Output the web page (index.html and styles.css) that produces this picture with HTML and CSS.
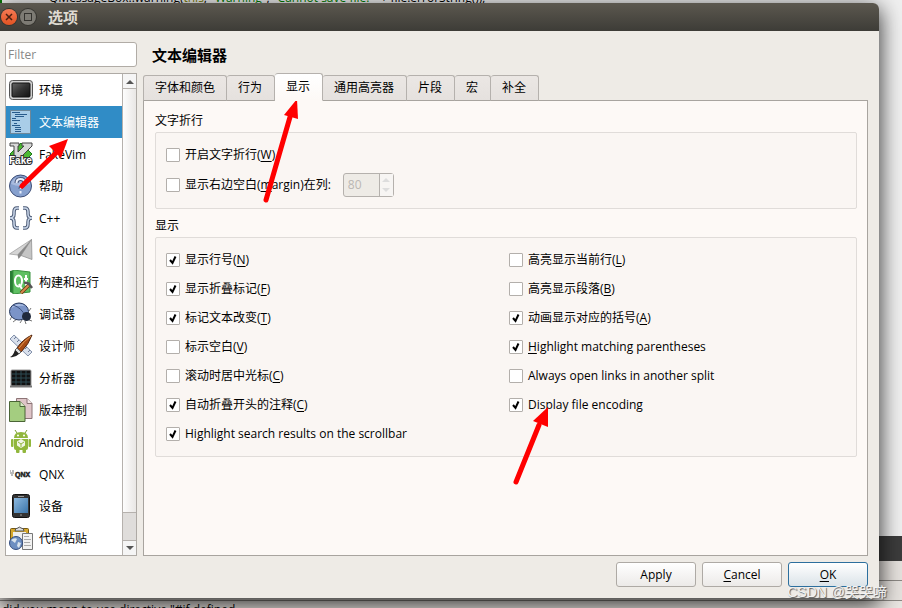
FILE: index.html
```
<!DOCTYPE html>
<html lang="zh-CN">
<head>
    <meta charset="utf-8">
    <title>选项</title>
    <link rel="stylesheet" href="styles.css">
</head>
<body>
    <!-- Editor window behind the dialog -->
    <div class="backdrop">
        <div class="editor">
            <div class="codeLine">QMessageBox::warning(<span class="keyword">this</span>, <span class="string">"Warning"</span>, <span class="string">"Cannot save file: "</span> + file.errorString());</div>
        </div>
        <div class="darkBar"></div>
        <div class="outputBar"></div>
        <div class="outputBar"></div>
        <div class="outputText">did you mean to use directive "#if defined</div>
    </div>

    <div class="dialog">
        <div class="titleBar">
            <button class="winBtn close" aria-label="关闭">
                <svg width="16" height="16" viewBox="0 0 16 16"><path d="M5 5l6 6M11 5l-6 6" stroke="#4a2012" stroke-width="1.5"/></svg>
            </button>
            <button class="winBtn" aria-label="最大化">
                <svg width="16" height="16" viewBox="0 0 16 16"><rect x="4.500" y="4.500" width="7" height="7" fill="none" stroke="#33322e"/></svg>
            </button>
            <span class="titleText">选项</span>
        </div>

        <div class="content">
            <div class="sidebar">
                <input type="text" class="filter" placeholder="Filter" aria-label="Filter">
                <div class="listBox">
                    <ul class="categories">
                        <li>
                            <svg viewBox="0 0 24 24">
                                <defs><linearGradient id="screen" x1="0" y1="0" x2="1" y2="1"><stop offset="0" stop-color="#666"/><stop offset=".5" stop-color="#333"/><stop offset="1" stop-color="#111"/></linearGradient></defs>
                                <rect x=".5" y="2.500" width="23" height="19" rx="3" fill="#d0d0d0" stroke="#555"/>
                                <rect x="3" y="5" width="18" height="14" rx="1" fill="url(#screen)" stroke="#111"/>
                            </svg>
                            <span>环境</span>
                        </li>
                        <li class="selected">
                            <svg viewBox="0 0 24 24">
                                <rect x="1.500" y=".5" width="20" height="23" fill="#a9cde8" stroke="#6c8799"/>
                                <path d="M3 2.500h8M6 4.500h12M6 6.500h9M3 8.500h4M3 10.500h8M5 13.500h3M3 15.500h8M6 17.500h6M6 19.500h6M6 21.500h6" stroke="#285b8c"/>
                            </svg>
                            <span>文本编辑器</span>
                        </li>
                        <li>
                            <svg viewBox="0 0 24 24">
                                <path d="M12 1l11 11-11 11L1 12z" fill="#4cb833" stroke="#1c7a1a"/>
                                <path d="M1 1h9v3H9v6l6-6h-2V1h10v3L11 16H5V4H1z" fill="#d8d8d8" stroke="#444"/>
                                <text x="0" y="22" class="fakeLogo">Fake</text>
                            </svg>
                            <span>FakeVim</span>
                        </li>
                        <li>
                            <svg viewBox="0 0 24 24">
                                <circle cx="11.500" cy="12" r="11" fill="#86a0ce" stroke="#3e4e77"/>
                                <path d="M2 10a10 10 0 0 1 19 0Q11 14 2 10z" fill="#a9bbde"/>
                                <path d="M7.500 9q0-4 4-4t4 3.500q0 2-2 3.500t-2 3" fill="none" stroke="#46557a" stroke-width="4"/>
                                <path d="M7.500 9q0-4 4-4t4 3.500q0 2-2 3.500t-2 3M11.500 17v2.500" fill="none" stroke="#e8eefb" stroke-width="2"/>
                            </svg>
                            <span>帮助</span>
                        </li>
                        <li>
                            <svg viewBox="0 0 24 24" fill="none">
                                <path d="M10 2H8Q5 2 5 6v2q0 4-4 4 4 0 4 4v2q0 4 3 4h2M14 2h2q3 0 3 4v2q0 4 4 4-4 0-4 4v2q0 4-3 4h-2" stroke="#4f5d78" stroke-width="3.500"/>
                                <path d="M10 2H8Q5 2 5 6v2q0 4-4 4 4 0 4 4v2q0 4 3 4h2M14 2h2q3 0 3 4v2q0 4 4 4-4 0-4 4v2q0 4-3 4h-2" stroke="#cbd8ea" stroke-width="1.500"/>
                            </svg>
                            <span>C++</span>
                        </li>
                        <li>
                            <svg viewBox="0 0 24 24">
                                <path d="M22.500 1.500L.5 16l8 1z" fill="#d5d5d5" stroke="#999" stroke-width=".7"/>
                                <path d="M22.500 1.500L8.500 17l1 4 3-3.500z" fill="#888"/>
                                <path d="M22.500 1.500L12 17.500l11 4z" fill="#c5c5c5" stroke="#888" stroke-width=".7"/>
                            </svg>
                            <span>Qt Quick</span>
                        </li>
                        <li>
                            <svg viewBox="0 0 24 24">
                                <path d="M1 1l4-1v24l-4-2z" fill="#287c34"/>
                                <path d="M4 0l17 2v20L4 24z" fill="#5fc063" stroke="#39913f"/>
                                <ellipse cx="9.500" cy="11" rx="3.500" ry="5.500" fill="none" stroke="#fff" stroke-width="2"/>
                                <path d="M10 14l3 5M17 5v9q0 2 2 2M15 9h4" fill="none" stroke="#fff" stroke-width="2"/>
                                <path d="M12 23l8-8" stroke="#693411" stroke-width="3.500"/>
                                <path d="M12 23l8-8" stroke="#d68a4b" stroke-width="2"/>
                                <path d="M15 13q3-1 5 1l3 4" fill="none" stroke="#555" stroke-width="2.500"/>
                            </svg>
                            <span>构建和运行</span>
                        </li>
                        <li>
                            <svg viewBox="0 0 24 24">
                                <path d="M3 14l-2 4M8 17l-4 3M13 18l-2 3M20 18l3 1M16 19l1 3M20 9l2-3" stroke="#777"/>
                                <ellipse cx="10" cy="9.500" rx="9.500" ry="8.500" fill="#7b94c8" stroke="#27385d"/>
                                <path d="M2 6Q9-1 16 4 8 3 2 6z" fill="#aabde2"/>
                                <path d="M4 3q9 3 12 11" fill="none" stroke="#3c507f"/>
                                <circle cx="17.500" cy="14.500" r="4.500" fill="#202a3d"/>
                            </svg>
                            <span>调试器</span>
                        </li>
                        <li>
                            <svg viewBox="0 0 24 24">
                                <path d="M1 5l4-4 18 17-4 4z" fill="#d9e0ec" stroke="#8492ac"/>
                                <path d="M7 3L5 5M10 6L8 8M13 9l-2 2M18 13l-2 2M21 16l-2 2" stroke="#6d7c99"/>
                                <path d="M23 1Q14 5 8 14l4 4Q20 10 23 1z" fill="#a94c15" stroke="#54260f"/>
                                <path d="M22 2Q15 7 10 14" stroke="#e29a54" fill="none"/>
                                <path d="M8 14l4 4-2 2-4-4z" fill="#ddd" stroke="#666"/>
                                <path d="M6 16l4 4q-4 4-9 3 3-1 5-7z" fill="#222"/>
                            </svg>
                            <span>设计师</span>
                        </li>
                        <li>
                            <svg viewBox="0 0 24 24">
                                <rect x="2" y="4" width="20" height="16" rx="1" fill="#111" stroke="#999"/>
                                <path d="M3 8h18M3 12h18M3 16h18M7 5v14M12 5v14M17 5v14" stroke="#2d4a52"/>
                                <path d="M1 20.500h22" stroke="#777" stroke-width="2"/>
                            </svg>
                            <span>分析器</span>
                        </li>
                        <li>
                            <svg viewBox="0 0 24 24">
                                <path d="M7.500.5H18l5 5v15H7.500z" fill="#dfc5c8" stroke="#8c7476"/>
                                <path d="M18 .5v5h5" fill="#f5e8e9" stroke="#8c7476"/>
                                <path d="M.5 3.500H11l5 5v15H.5z" fill="#a4cd80" stroke="#4a6536"/>
                                <path d="M11 3.500v5h5" fill="#d9ecc7" stroke="#4a6536"/>
                            </svg>
                            <span>版本控制</span>
                        </li>
                        <li>
                            <svg viewBox="0 0 24 24" fill="#91b73c">
                                <path d="M8 3L6 0M16 3l2-3" stroke="#7a9d2f"/>
                                <path d="M5 8q0-6 7-6t7 6z"/>
                                <path d="M5 9h14v9q0 2-2 2H7q-2 0-2-2z"/>
                                <rect x="2" y="9" width="2.500" height="8" rx="1"/><rect x="19.500" y="9" width="2.500" height="8" rx="1"/>
                                <rect x="7" y="18" width="3.500" height="5" rx="1"/><rect x="13.500" y="18" width="3.500" height="5" rx="1"/>
                                <circle cx="9" cy="5.500" r="1" fill="#fff"/><circle cx="15" cy="5.500" r="1" fill="#fff"/>
                                <path d="M12 9l4 2.500v4L12 18l-4-2.500v-4z" fill="#f1f5e7"/>
                                <path d="M9 12l3 2 3-2M12 14v3" fill="none" stroke="#91b73c"/>
                            </svg>
                            <span>Android</span>
                        </li>
                        <li>
                            <svg viewBox="0 0 24 24">
                                <path d="M1 9h1M3 9h2M1 11h4M2 13h2" stroke="#777"/>
                                <text x="6" y="15" class="qnxLogo">QNX</text>
                            </svg>
                            <span>QNX</span>
                        </li>
                        <li>
                            <svg viewBox="0 0 24 24">
                                <defs><linearGradient id="tablet" x1="0" y1="0" x2="1" y2="1"><stop offset="0" stop-color="#8db9df"/><stop offset="1" stop-color="#3a75aa"/></linearGradient></defs>
                                <rect x="3.500" y=".5" width="17" height="23" rx="2" fill="#333" stroke="#111"/>
                                <rect x="5" y="4" width="14" height="15" fill="url(#tablet)"/>
                                <path d="M9 2.500h6M11 21h2" stroke="#999"/>
                            </svg>
                            <span>设备</span>
                        </li>
                        <li>
                            <svg viewBox="0 0 24 24">
                                <rect x="1.500" y="2.500" width="18" height="17" rx="1" fill="#d6a72b" stroke="#735816"/>
                                <path d="M6 5q0-3 3-3 1-2 3 0 3 0 3 3z" fill="#ddd" stroke="#555"/>
                                <rect x="4" y="6" width="13" height="11" fill="#eee"/>
                                <path d="M13.500 7.500h10v16h-10z" fill="#f2f2f2" stroke="#777"/>
                                <path d="M15 10.500h5M15 13.500h7M15 16.500h6M15 19.500h7" stroke="#aaa"/>
                                <circle cx="7" cy="17" r="6.500" fill="#6e8fc1" stroke="#344d7e"/>
                                <path d="M2 14q4-3 6-1l-2 4zM9 16l3 1-2 5-2-2z" fill="#dae4ed"/>
                            </svg>
                            <span>代码粘贴</span>
                        </li>
                    </ul>
                    <div class="scrollbar">
                        <div class="arrowBtn"><svg width="8" height="5" viewBox="0 0 8 5"><path d="M0 5l4-4 4 4z" fill="#555"/></svg></div>
                        <div class="thumb"></div>
                        <div class="trough"></div>
                        <div class="arrowBtn"><svg width="8" height="5" viewBox="0 0 8 5"><path d="M0 0l4 4 4-4z" fill="#555"/></svg></div>
                    </div>
                </div>
            </div>

            <div class="main">
                <h1>文本编辑器</h1>
                <div class="tabs">
                    <button>字体和颜色</button>
                    <button>行为</button>
                    <button class="active">显示</button>
                    <button>通用高亮器</button>
                    <button>片段</button>
                    <button>宏</button>
                    <button>补全</button>
                </div>
                <div class="panel">
                    <h2>文字折行</h2>
                    <div class="group wrapping">
                        <div class="option"><label><input type="checkbox"><span>开启文字折行(<u>W</u>)</span></label></div>
                        <div class="option">
                            <label><input type="checkbox"><span>显示右边空白(<u>m</u>argin)在列:</span></label>
                            <div class="spinBox">
                                <input type="text" value="80" aria-label="列" disabled>
                                <div class="spinArrows">
                                    <svg width="8" height="4" viewBox="0 0 8 4"><path d="M0 4l4-4 4 4z" fill="#ddd"/></svg>
                                    <svg width="8" height="4" viewBox="0 0 8 4"><path d="M0 0l4 4 4-4z" fill="#ddd"/></svg>
                                </div>
                            </div>
                        </div>
                    </div>

                    <h2>显示</h2>
                    <div class="group display">
                        <div class="column">
                            <label><input type="checkbox" checked><span>显示行号(<u>N</u>)</span></label>
                            <label><input type="checkbox" checked><span>显示折叠标记(<u>F</u>)</span></label>
                            <label><input type="checkbox" checked><span>标记文本改变(<u>T</u>)</span></label>
                            <label><input type="checkbox"><span>标示空白(<u>V</u>)</span></label>
                            <label><input type="checkbox"><span>滚动时居中光标(<u>C</u>)</span></label>
                            <label><input type="checkbox" checked><span>自动折叠开头的注释(<u>C</u>)</span></label>
                            <label><input type="checkbox" checked><span>Highlight search results on the scrollbar</span></label>
                        </div>
                        <div class="column">
                            <label><input type="checkbox"><span>高亮显示当前行(<u>L</u>)</span></label>
                            <label><input type="checkbox"><span>高亮显示段落(<u>B</u>)</span></label>
                            <label><input type="checkbox" checked><span>动画显示对应的括号(<u>A</u>)</span></label>
                            <label><input type="checkbox" checked><span><u>H</u>ighlight matching parentheses</span></label>
                            <label><input type="checkbox"><span>Always open links in another split</span></label>
                            <label><input type="checkbox" checked><span>Display file encoding</span></label>
                        </div>
                    </div>
                </div>
            </div>
        </div>

        <div class="buttons">
            <button>Apply</button>
            <button><u>C</u>ancel</button>
            <button class="ok"><u>O</u>K</button>
        </div>
    </div>

    <!-- Red arrows drawn over the dialog -->
    <svg class="arrows" width="600" height="500" viewBox="0 0 600 500">
        <g stroke="#f00" stroke-width="5" stroke-linecap="round" fill="#f00">
            <path d="M22 186L56 153"/><path d="M266 200L290 117"/><path d="M516 482L539 425"/>
        </g>
        <g fill="#f00"><path d="M68 139L61 158 49 146z"/><path d="M297 99L298 119 284 115z"/><path d="M548 407L548 427 533 421z"/></g>
    </svg>
    <div class="watermark">CSDN @哭哭啼</div>
</body>
</html>
```
FILE: styles.css
```
* {
    box-sizing: border-box;
}

body {
    position: relative;
    margin: 0;
    min-height: 100vh;
    overflow: hidden;
    font-family: "Open Sans", "Noto Sans CJK SC", sans-serif;
    font-size: 12px;
    line-height: 18px;
    color: #000;
}

button, input {
    font: inherit;
    color: inherit;
}

u {
    text-underline-offset: 2px;
}

/* Window behind */
.backdrop {
    position: absolute;
    inset: 0;
    display: flex;
    flex-direction: column;
    overflow: hidden;
    background: #f0f0f0;
}

.editor {
    flex: 1;
    border-left: 2px solid #087a08;
}

.codeLine {
    height: 4px;
    padding-left: 47px;
    line-height: 4px;
    margin-top: -4px;
    white-space: nowrap;
}

.keyword {
    color: #808000;
}

.string {
    color: #008000;
}

.darkBar {
    height: 25px;
    background: #3c3c3c;
}

.outputBar {
    height: 20px;
    background: #e6e2de;
    border-bottom: 1px solid #8c8884;
}

.outputText {
    height: 7px;
    padding-left: 2px;
    line-height: 18px;
    background: #eae6e2;
}

/* Dialog */
.dialog {
    position: relative;
    margin: 3px 23px 10px 0;
    background: #eeebe6;
    border-radius: 0 6px 0 0;
    box-shadow: 0 6px 22px 1px rgba(0, 0, 0, 0.8);
}

.titleBar {
    display: flex;
    align-items: center;
    gap: 3px;
    height: 28px;
    padding-left: 1px;
    border-radius: 0 6px 0 0;
    background: linear-gradient(#5c584f, #3d3c37);
}

.winBtn {
    display: flex;
    width: 16px;
    height: 16px;
    padding: 0;
    border: 0;
    border-radius: 50%;
    background: #7d7b74;
    box-shadow: 0 0 0 1px #35342f;
}

.winBtn.close {
    background: linear-gradient(#f47a55, #e25322);
}

.titleText {
    padding-left: 9px;
    font-size: 15px;
    font-weight: bold;
    color: #dfdbd2;
}

.content {
    display: flex;
    gap: 6px;
    padding: 11px 11px 0 5px;
}

.sidebar {
    flex: none;
    display: flex;
    flex-direction: column;
    gap: 6px;
    width: 132px;
}

.filter {
    width: 100%;
    height: 25px;
    padding: 0 2px;
    border: 1px solid #b1aca6;
    border-radius: 3px;
    background: #fff;
}

.filter::placeholder {
    color: #888;
}

.listBox {
    flex: 1;
    display: flex;
    border: 1px solid #aeaaa5;
    background: #fff;
}

.categories {
    flex: 1;
    margin: 0;
    padding: 0 0 1px;
    list-style: none;
}

.categories li {
    display: flex;
    align-items: center;
    gap: 6px;
    height: 32px;
    padding-left: 3px;
    white-space: nowrap;
}

.categories span {
    padding-top: 2px;
}

.categories li.selected {
    background: #308cc6;
    color: #fff;
}

.categories svg {
    flex: none;
    width: 24px;
    height: 24px;
}

.fakeLogo {
    font: bold 10px "Liberation Sans", sans-serif;
    fill: #fff;
    stroke: #333;
    stroke-width: 2px;
    paint-order: stroke;
}

.qnxLogo {
    font: bold 7px "Liberation Sans", sans-serif;
    fill: #222;
    stroke: #222;
    stroke-width: 0.5px;
}

.scrollbar {
    display: flex;
    flex-direction: column;
    width: 14px;
    border-left: 1px solid #b5b1ad;
}

.arrowBtn {
    display: flex;
    align-items: center;
    justify-content: center;
    height: 14px;
    background: #f5f5f5;
}

.thumb {
    flex: 1;
    border: solid #b5b1ad;
    border-width: 1px 0;
    background: linear-gradient(90deg, #fdfdfd, #e9e7e5);
}

.trough {
    height: 28px;
    border-bottom: 1px solid #b5b1ad;
    background: #dfdddb;
}

.main {
    flex: 1;
    display: flex;
    flex-direction: column;
}

h1 {
    margin: 0;
    padding: 2px 9px 7px;
    font-size: 15px;
    line-height: 22px;
}

.tabs {
    display: flex;
    align-items: flex-end;
    height: 28px;
    margin-bottom: -1px;
    z-index: 1;
}

.tabs button {
    height: 26px;
    padding: 0 12px 0 11px;
    border: 1px solid #b5b1ad;
    border-left-width: 0;
    border-bottom-color: #a8a49f;
    border-radius: 3px 3px 0 0;
    background: linear-gradient(#ebe7e4, #e5e1de);
}

.tabs button:first-child {
    padding-right: 11px;
    border-left-width: 1px;
}

.tabs .active {
    height: 28px;
    border-bottom-color: #fdf9f6;
    background: linear-gradient(#fff, #fdf9f6);
}

.panel {
    flex: 1;
    padding: 11px 10px 20px 11px;
    border: 1px solid #a8a49f;
    background: #fdf9f6;
}

h2 {
    margin: 0;
    font-size: 12px;
    font-weight: normal;
    line-height: 18px;
}

.group {
    margin: 2px 0 8px;
    border: 1px solid #e0dcd9;
    border-radius: 2px;
    background: #faf6f3;
}

.wrapping {
    padding: 7px 10px 8px;
}

.option {
    display: flex;
    align-items: center;
    gap: 12px;
    height: 30px;
}

label {
    display: flex;
    align-items: center;
    gap: 5px;
    white-space: nowrap;
}

input[type="checkbox"] {
    appearance: none;
    width: 14px;
    height: 14px;
    margin: 0;
    border: 1px solid #b3afab;
    border-radius: 1px;
    background: #fff;
}

input[type="checkbox"]:checked {
    background: #fff url("data:image/svg+xml,%3Csvg xmlns='http://www.w3.org/2000/svg' viewBox='0 0 12 12'%3E%3Cpath d='M3 6l2.500 3L8.500 2.500' fill='none' stroke='%23000' stroke-width='2'/%3E%3C/svg%3E");
}

.spinBox {
    display: flex;
    width: 51px;
    height: 24px;
    border: 1px solid #b5b1ad;
    border-radius: 3px;
    background: #eeebe6;
}

.spinBox input {
    width: 36px;
    padding: 0 4px;
    border: 0;
    border-right: 1px solid #b5b1ad;
    background: none;
    color: #bbb7b3;
}

.spinArrows {
    flex: 1;
    display: flex;
    flex-direction: column;
    align-items: center;
    justify-content: center;
    gap: 6px;
    background: #f7f5f3;
}

.display {
    display: grid;
    grid-template-columns: 1fr 1fr;
    gap: 6px;
    margin-bottom: 0;
    padding: 7px 10px 8px;
}

.column label {
    height: 29px;
}

.buttons {
    display: flex;
    justify-content: flex-end;
    gap: 6px;
    padding: 6px 11px 11px;
}

.buttons button {
    width: 80px;
    height: 25px;
    padding: 0;
    border: 1px solid #aeaaa5;
    border-radius: 3px;
    background: linear-gradient(#fff, #eceae8);
}

.buttons .ok {
    border-color: #2c6f9e;
    background: linear-gradient(#fff, #dbe3e8);
}

/* Overlays */
.arrows {
    position: absolute;
    top: 0;
    left: 0;
    pointer-events: none;
}

.watermark {
    position: absolute;
    right: 15px;
    bottom: 7px;
    font-family: "Liberation Sans", "Noto Sans CJK SC", sans-serif;
    font-size: 14px;
    color: #f2f2f2;
    text-shadow: 1px 1px 1px #555;
}
```
